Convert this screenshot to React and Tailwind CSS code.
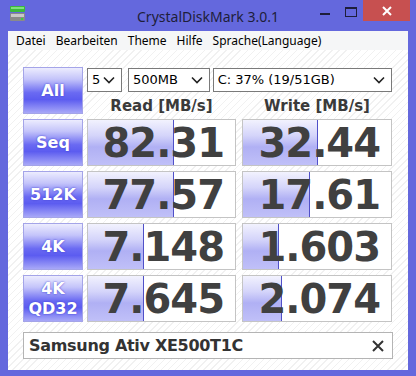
import React from "react";

const rows = [
  { label: ["Seq"], read: "82.31", write: "32.44", rw: 86, ww: 75 },
  { label: ["512K"], read: "77.57", write: "17.61", rw: 86, ww: 67 },
  { label: ["4K"], read: "7.148", write: "1.603", rw: 56, ww: 36 },
  { label: ["4K", "QD32"], read: "7.645", write: "2.074", rw: 56, ww: 39 },
];

const menu = ["Datei", "Bearbeiten", "Theme", "Hilfe", "Sprache(Language)"];

function DriveIcon() {
  return (
    <svg width="18" height="18" viewBox="0 0 18 18">
      <rect x="1" y="1" width="15" height="6" rx="1" fill="#3cb93c" />
      <rect x="2" y="2" width="13" height="2" fill="#7fe07f" />
      <rect x="1" y="8" width="15" height="8" rx="1" fill="#8a8a8a" />
      <rect x="2" y="9" width="13" height="3" fill="#c8c8c8" />
      <rect x="12" y="13" width="2" height="2" fill="#3cd03c" />
    </svg>
  );
}

function Chevron() {
  return (
    <svg width="12" height="8" viewBox="0 0 12 8">
      <path d="M1 1.5 L6 6.5 L11 1.5" fill="none" stroke="#222" strokeWidth="1.6" />
    </svg>
  );
}

function Select({ value, className }) {
  return (
    <div
      className={`flex h-[24px] items-center justify-between border border-[#7a7a7a] bg-white pl-[4px] pr-[6px] text-[13px] text-black ${className}`}
    >
      <span>{value}</span>
      <Chevron />
    </div>
  );
}

function Button({ label, className = "" }) {
  return (
    <div
      className={`flex w-[60px] shrink-0 flex-col items-center justify-center border border-[#a4a4e8] bg-[linear-gradient(to_bottom,#ececfe_0%,#c4c4fa_25%,#6a6af2_55%,#5c5cf0_70%,#a8a8f8_100%)] font-bold leading-[20px] text-white [text-shadow:0_0_2px_#3a3ad0] ${className}`}
    >
      {label.map((l) => (
        <span key={l} className="text-[16px]">
          {l}
        </span>
      ))}
    </div>
  );
}

function Value({ text, bar, width }) {
  return (
    <div className={`relative h-[47px] ${width} border border-[#c4c4c4] bg-white`}>
      <div
        className="absolute inset-y-0 left-0 border-r border-[#5050c8] bg-[linear-gradient(to_bottom,#f2f2fe_0%,#d4d4fa_35%,#b0b0f4_60%,#c0c0f8_100%)]"
        style={{ width: bar }}
      />
      <div className="relative flex h-full items-center justify-end pr-[11px] text-[40px] font-bold tracking-[-1px] text-[#404040]">
        {text}
      </div>
    </div>
  );
}

export default function App() {
  return (
    <div className="flex h-[376px] w-[416px] flex-col bg-[#6468dd] font-['DejaVu_Sans',sans-serif]">
      {/* Title bar */}
      <div className="relative flex h-[31px] shrink-0 items-center">
        <div className="absolute left-[9px] top-[5px]">
          <DriveIcon />
        </div>
        <div className="flex-1 pt-[2px] text-center font-['Noto_Sans',sans-serif] text-[14px] text-[#1e1e3a]">
          CrystalDiskMark 3.0.1
        </div>
        <div className="absolute right-[86px] top-[13px] h-[2px] w-[10px] bg-[#1e1e3a]" />
        <div className="absolute right-[59px] top-[7px] h-[10px] w-[12px] border border-[#1e1e3a] border-t-2" />
        <div className="absolute right-[6px] top-0 flex h-[21px] w-[47px] items-center justify-center bg-[#c75050]">
          <svg width="10" height="10" viewBox="0 0 10 10">
            <path d="M1 1 L9 9 M9 1 L1 9" stroke="#fff" strokeWidth="2" />
          </svg>
        </div>
      </div>

      {/* Menu */}
      <div className="mx-[8px] flex h-[19px] shrink-0 items-center gap-[10px] bg-[#f5f6f7] pl-[8px] font-['Noto_Sans',sans-serif] text-[12px] text-black">
        {menu.map((m) => (
          <span key={m}>{m}</span>
        ))}
      </div>

      {/* Client */}
      <div className="mx-[8px] flex h-[320px] shrink-0 flex-col gap-[5px] bg-[repeating-linear-gradient(135deg,#ffffff_0px,#ffffff_4px,#f1f1f1_4px,#f1f1f1_5px)] pl-[15px] pt-[17px]">
        <div className="flex h-[47px] gap-[4px]">
          <Button label={["All"]} className="text-[17px]" />
          <div className="flex w-[305px] flex-col">
            <div className="mt-[1px] flex">
              <Select value="5" className="w-[35px]" />
              <Select value="500MB" className="ml-[6px] w-[82px]" />
              <Select value="C: 37% (19/51GB)" className="ml-[3px] w-[180px]" />
            </div>
            <div className="mt-[3px] flex text-[15px] font-bold text-[#3a3a3a]">
              <div className="w-[149px] text-center">Read [MB/s]</div>
              <div className="ml-[6px] w-[150px] text-center">Write [MB/s]</div>
            </div>
          </div>
        </div>

        {rows.map((r) => (
          <div key={r.read} className="flex h-[47px] gap-[4px]">
            <Button label={r.label} />
            <Value text={r.read} bar={r.rw} width="w-[149px]" />
            <div className="ml-[2px]">
              <Value text={r.write} bar={r.ww} width="w-[150px]" />
            </div>
          </div>
        ))}

        <div className="mt-[5px] flex h-[27px] w-[370px] items-center justify-between border border-[#b4b4b4] bg-white pl-[5px] pr-[8px]">
          <span className="text-[16px] font-bold tracking-[-0.3px] text-[#333]">
            Samsung Ativ XE500T1C
          </span>
          <svg width="12" height="12" viewBox="0 0 12 12">
            <path d="M1 1 L11 11 M11 1 L1 11" stroke="#333" strokeWidth="2" />
          </svg>
        </div>
      </div>
    </div>
  );
}
